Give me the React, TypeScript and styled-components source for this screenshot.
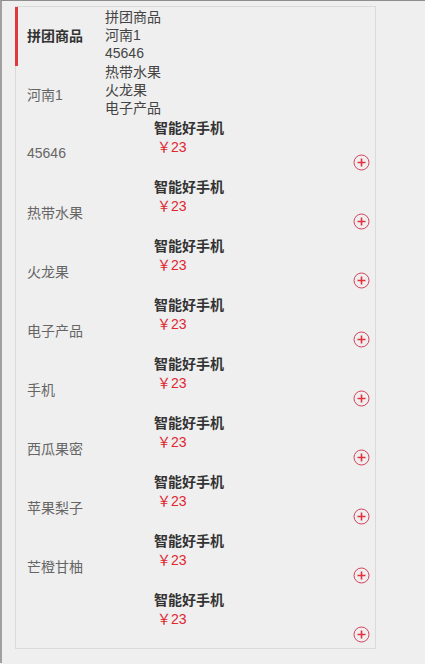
import React, { useState } from "react";
import styled, { createGlobalStyle } from "styled-components";

const GlobalStyle = createGlobalStyle`
  html, body {
    margin: 0;
    padding: 0;
    background: #efefef;
  }
  body {
    font-family: "Liberation Sans", "Noto Sans CJK SC", sans-serif;
    font-size: 14px;
  }
`;

const Page = styled.div`
  min-height: 663px;
  box-sizing: border-box;
  border-top: 1px solid #8e8e8e;
  border-left: 2px solid #a0a0a0;
  padding: 5px 0 0 13px;
  background: #efefef;
`;

const Box = styled.div`
  width: 361px;
  box-sizing: border-box;
  border: 1px solid #dadada;
  display: flex;
  align-items: flex-start;
`;

const Menu = styled.ul`
  list-style: none;
  margin: 0 0 0 -1px;
  padding: 0;
  width: 90px;
  flex-shrink: 0;
`;

const MenuItem = styled.li<{ $active?: boolean }>`
  height: 59px;
  display: flex;
  align-items: center;
  box-sizing: border-box;
  padding: 0 0 4px 9px;
  border-left: 3px solid ${(p) => (p.$active ? "#e0393e" : "transparent")};
  color: ${(p) => (p.$active ? "#333" : "#666")};
  font-weight: ${(p) => (p.$active ? "bold" : "normal")};
  cursor: pointer;
`;

const Content = styled.div`
  flex: 1;
  min-width: 0;
  padding-top: 1px;
`;

const CategoryLine = styled.div`
  line-height: 18.2px;
  color: #444;
`;

const Product = styled.div`
  height: 59px;
  box-sizing: border-box;
  padding: 2px 0 0 49px;
`;

const Name = styled.div`
  line-height: 19px;
  font-weight: bold;
  color: #333;
`;

const Price = styled.div`
  line-height: 18px;
  padding-left: 3px;
  color: #e0262f;
`;

const AddRow = styled.div`
  display: flex;
  justify-content: flex-end;
  padding-right: 5px;
  margin-top: -2px;
  height: 17px;
`;

const AddButton = styled.button`
  border: none;
  background: none;
  padding: 0;
  width: 17px;
  height: 17px;
  cursor: pointer;
  display: block;
`;

const PlusIcon = () => (
  <svg width="17" height="17" viewBox="0 0 17 17">
    <circle cx="8.5" cy="8.5" r="7.5" fill="none" stroke="#d2405a" strokeWidth="1" />
    <path d="M8.5 4.5v8M4.5 8.5h8" stroke="#e3323e" strokeWidth="1.6" />
  </svg>
);

const menus = [
  "拼团商品",
  "河南1",
  "45646",
  "热带水果",
  "火龙果",
  "电子产品",
  "手机",
  "西瓜果密",
  "苹果梨子",
  "芒橙甘柚",
];

const categories = ["拼团商品", "河南1", "45646", "热带水果", "火龙果", "电子产品"];

const products = Array.from({ length: 9 }, (_, i) => ({
  id: i,
  name: "智能好手机",
  price: 23,
}));

const App = () => {
  const [active, setActive] = useState(0);
  return (
    <>
      <GlobalStyle />
      <Page>
        <Box>
          <Menu>
            {menus.map((m, i) => (
              <MenuItem key={m} $active={i === active} onClick={() => setActive(i)}>
                {m}
              </MenuItem>
            ))}
          </Menu>
          <Content>
            {categories.map((c) => (
              <CategoryLine key={c}>{c}</CategoryLine>
            ))}
            {products.map((p) => (
              <Product key={p.id}>
                <Name>{p.name}</Name>
                <Price>￥{p.price}</Price>
                <AddRow>
                  <AddButton aria-label="add">
                    <PlusIcon />
                  </AddButton>
                </AddRow>
              </Product>
            ))}
          </Content>
        </Box>
      </Page>
    </>
  );
};

export default App;
